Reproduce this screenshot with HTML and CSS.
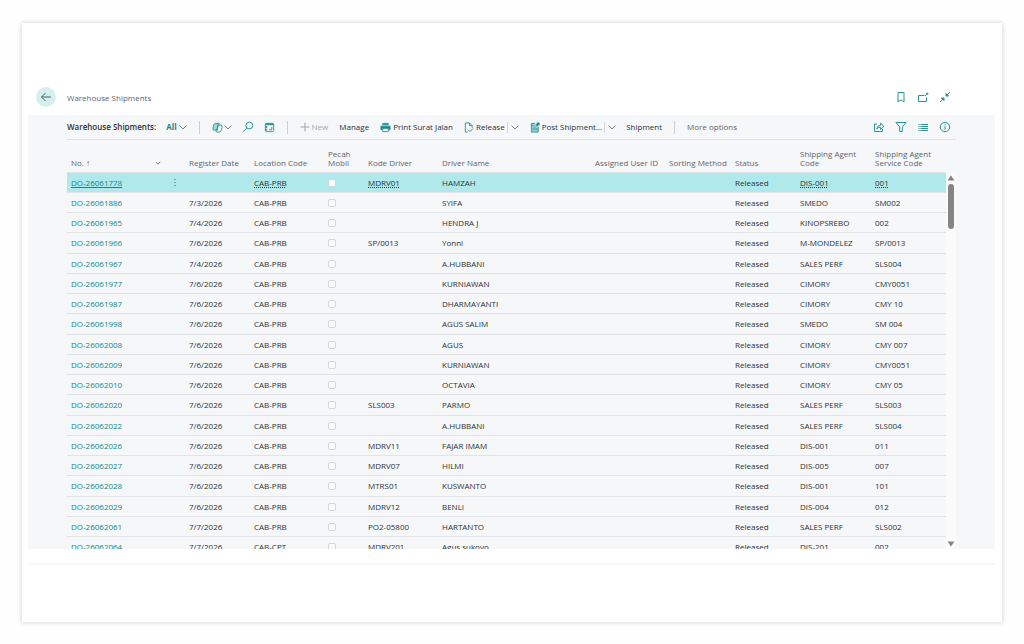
FILE: index.html
```html
<!DOCTYPE html>
<html lang="en">
<head>
    <meta charset="UTF-8">
    <title>Warehouse Shipments</title>
    <link rel="stylesheet" href="styles.css">
</head>
<body>
    <main class="sheet">
        <!-- Page title -->
        <header class="top">
            <button class="back" aria-label="Back">
                <svg width="12" height="12" viewBox="0 0 12 12"><path d="M11 6H1.5M5.5 2L1.5 6l4 4"/></svg>
            </button>
            <h1>Warehouse Shipments</h1>
            <div class="icons">
                <button aria-label="Bookmark"><svg width="12" height="12" viewBox="0 0 12 12"><path d="M3 1.500h6v9.500L6 8.800 3 11z"/></svg></button>
                <button aria-label="Open in new window"><svg width="12" height="12" viewBox="0 0 12 12"><path d="M7.500 4.500H1.500v6h8V6.500M8 5L10.500 2.500"/><path class="solid" d="M9.500 2.200h1.300v1.300z"/></svg></button>
                <button aria-label="Collapse"><svg width="12" height="12" viewBox="0 0 12 12"><path d="M11 1L7.500 4.500M1 11l3.500-3.500"/><path class="solid" d="M7 2.500V5h2.500zM2.500 7H5v2.500z"/></svg></button>
            </div>
        </header>

        <section class="panel">
            <!-- Action bar -->
            <div class="toolbar">
                <strong class="view-name">Warehouse Shipments:</strong>
                <button class="all">All <svg width="8" height="8" viewBox="0 0 8 8" class="chev"><path d="M.5 2.500L4 6l3.500-3.500"/></svg></button>
                <span class="divider"></span>
                <button class="copilot" aria-label="Copilot">
                    <svg width="11" height="11" viewBox="0 0 12 12"><path class="pale" d="M4 1.500h3L5 9H2.500Q.7 9 1 7l.7-3.500Q2.300 1.500 4 1.500z"/><path d="M4 1.500h3.500q1 0 1.300 1.500M4 1.500Q2.300 1.500 1.700 3.500L1 7q-.2 2 1.500 2H5l2-7.500M8 11H5.500Q4.500 11 4.300 9.500M8 11q1.500 0 2.300-2.500L11 6q.5-2.500-1.500-2.500H7L5.300 10"/></svg>
                    <svg width="8" height="8" viewBox="0 0 8 8" class="chev"><path d="M.5 2.500L4 6l3.500-3.500"/></svg>
                </button>
                <button class="search" aria-label="Search"><svg width="12" height="12" viewBox="0 0 12 12"><circle cx="7.300" cy="4.500" r="3.400"/><path d="M4.800 7L1 10.800"/></svg></button>
                <button class="analyze" aria-label="Analyze"><svg width="11" height="11" viewBox="0 0 12 12"><rect x="1.500" y="1.500" width="9" height="9" rx="1"/><path class="solid" d="M2 2h8v1H2zM2 5h1v1H2zM2 8h1v1H2z"/><path d="M8.500 5.500v3H5.500"/></svg></button>
                <span class="divider"></span>
                <button class="new" disabled><svg width="10" height="10" viewBox="0 0 10 10"><path d="M5 .5v9M.5 5h9"/></svg>New</button>
                <button class="action">Manage</button>
                <button class="action"><svg width="11" height="11" viewBox="0 0 12 12"><path class="solid" d="M3 1.500h6v1.500H3zM1 4.500h10v4H9.500V7h-7v1.500H1z"/><path class="paper" d="M3 7h6v3.500H3z"/></svg>Print Surat Jalan</button>
                <button class="action"><svg width="10" height="11" viewBox="0 0 10 12"><path d="M3.500 11H1V1h4.500L8.500 4v2.500M5.500 1v3h3M4 8.500l2 2L9.500 7"/></svg>Release</button>
                <button class="split" aria-label="More release options"><svg width="8" height="8" viewBox="0 0 8 8" class="chev"><path d="M.5 2.500L4 6l3.500-3.500"/></svg></button>
                <button class="action"><svg width="10" height="11" viewBox="0 0 10 12"><path class="pale" d="M1 1h5v3h3v7H1z"/><path d="M5 1.500H1v9.500h7.500V5.500M1 4h3M3 6v3M5 5v4M7 6.500V9"/><path class="solid" d="M7 1h2.500v2.500L8.500 3 7 4.500 6 3.500 7.500 2z"/></svg>Post Shipment...</button>
                <button class="split" aria-label="More posting options"><svg width="8" height="8" viewBox="0 0 8 8" class="chev"><path d="M.5 2.500L4 6l3.500-3.500"/></svg></button>
                <button class="shipment">Shipment</button>
                <span class="divider"></span>
                <button class="more">More options</button>
                <div class="icons">
                    <button aria-label="Share"><svg width="12" height="12" viewBox="0 0 12 12"><path d="M4 3H1.500v7.500h8V8M3.800 8q.2-3.700 3.700-3.700V2.200l3.500 3.200-3.500 3V6.300Q5 6.300 3.800 8z"/></svg></button>
                    <button aria-label="Filter"><svg width="12" height="12" viewBox="0 0 12 12"><path d="M1 1.500h10L7.300 6v4.500H4.700V6z"/></svg></button>
                    <button aria-label="List view"><svg width="12" height="12" viewBox="0 0 12 12"><path d="M1.500 3.500h1M3.500 3.500h7.500M1.500 5.500h1M3.500 5.500h7.500M1.500 7.500h1M3.500 7.500h7.500M1.500 9.500h1M3.500 9.500h7.500"/></svg></button>
                    <button aria-label="Details"><svg width="12" height="12" viewBox="0 0 12 12"><circle cx="6" cy="6" r="4.700"/><path d="M6 5.200v3.300M6 3.300v1"/></svg></button>
                </div>
            </div>

            <!-- Shipment list -->
            <div class="list">
                <div class="rows">
                    <table>
                        <colgroup>
                            <col class="c-no"><col class="c-date"><col class="c-mid"><col class="c-check"><col class="c-mid"><col class="c-name"><col class="c-mid"><col class="c-sort"><col class="c-date"><col class="c-agent"><col class="c-agent">
                        </colgroup>
                        <thead>
                            <tr>
                                <th><div class="no-head">No. ↑ <svg width="6" height="6" viewBox="0 0 8 8"><path d="M1 2.500l3 3 3-3"/></svg></div></th>
                                <th>Register Date</th><th>Location Code</th><th>Pecah<br>Mobil</th><th>Kode Driver</th><th>Driver Name</th><th>Assigned User ID</th><th>Sorting Method</th><th>Status</th><th>Shipping Agent<br>Code</th><th>Shipping Agent<br>Service Code</th>
                            </tr>
                        </thead>
                        <tbody>
                            <tr class="selected"><td><div class="no-cell"><a href="#">DO-26061778</a><button aria-label="Row options"><svg width="4" height="12" viewBox="0 0 4 12"><path d="M1.500 2.500h1M1.500 5.500h1M1.500 8.500h1"/></svg></button></div></td><td></td><td><u>CAB-PRB</u></td><td><input type="checkbox" aria-label="Pecah Mobil"></td><td><u>MDRV01</u></td><td>HAMZAH</td><td></td><td></td><td>Released</td><td><u>DIS-001</u></td><td><u>001</u></td></tr>
                            <tr><td><a href="#">DO-26061886</a></td><td>7/3/2026</td><td>CAB-PRB</td><td><input type="checkbox" aria-label="Pecah Mobil"></td><td></td><td>SYIFA</td><td></td><td></td><td>Released</td><td>SMEDO</td><td>SM002</td></tr>
                            <tr><td><a href="#">DO-26061965</a></td><td>7/4/2026</td><td>CAB-PRB</td><td><input type="checkbox" aria-label="Pecah Mobil"></td><td></td><td>HENDRA J</td><td></td><td></td><td>Released</td><td>KINOPSREBO</td><td>002</td></tr>
                            <tr><td><a href="#">DO-26061966</a></td><td>7/6/2026</td><td>CAB-PRB</td><td><input type="checkbox" aria-label="Pecah Mobil"></td><td>SP/0013</td><td>Yonni</td><td></td><td></td><td>Released</td><td>M-MONDELEZ</td><td>SP/0013</td></tr>
                            <tr><td><a href="#">DO-26061967</a></td><td>7/4/2026</td><td>CAB-PRB</td><td><input type="checkbox" aria-label="Pecah Mobil"></td><td></td><td>A.HUBBANI</td><td></td><td></td><td>Released</td><td>SALES PERF</td><td>SLS004</td></tr>
                            <tr><td><a href="#">DO-26061977</a></td><td>7/6/2026</td><td>CAB-PRB</td><td><input type="checkbox" aria-label="Pecah Mobil"></td><td></td><td>KURNIAWAN</td><td></td><td></td><td>Released</td><td>CIMORY</td><td>CMY0051</td></tr>
                            <tr><td><a href="#">DO-26061987</a></td><td>7/6/2026</td><td>CAB-PRB</td><td><input type="checkbox" aria-label="Pecah Mobil"></td><td></td><td>DHARMAYANTI</td><td></td><td></td><td>Released</td><td>CIMORY</td><td>CMY 10</td></tr>
                            <tr><td><a href="#">DO-26061998</a></td><td>7/6/2026</td><td>CAB-PRB</td><td><input type="checkbox" aria-label="Pecah Mobil"></td><td></td><td>AGUS SALIM</td><td></td><td></td><td>Released</td><td>SMEDO</td><td>SM 004</td></tr>
                            <tr><td><a href="#">DO-26062008</a></td><td>7/6/2026</td><td>CAB-PRB</td><td><input type="checkbox" aria-label="Pecah Mobil"></td><td></td><td>AGUS</td><td></td><td></td><td>Released</td><td>CIMORY</td><td>CMY 007</td></tr>
                            <tr><td><a href="#">DO-26062009</a></td><td>7/6/2026</td><td>CAB-PRB</td><td><input type="checkbox" aria-label="Pecah Mobil"></td><td></td><td>KURNIAWAN</td><td></td><td></td><td>Released</td><td>CIMORY</td><td>CMY0051</td></tr>
                            <tr><td><a href="#">DO-26062010</a></td><td>7/6/2026</td><td>CAB-PRB</td><td><input type="checkbox" aria-label="Pecah Mobil"></td><td></td><td>OCTAVIA</td><td></td><td></td><td>Released</td><td>CIMORY</td><td>CMY 05</td></tr>
                            <tr><td><a href="#">DO-26062020</a></td><td>7/6/2026</td><td>CAB-PRB</td><td><input type="checkbox" aria-label="Pecah Mobil"></td><td>SLS003</td><td>PARMO</td><td></td><td></td><td>Released</td><td>SALES PERF</td><td>SLS003</td></tr>
                            <tr><td><a href="#">DO-26062022</a></td><td>7/6/2026</td><td>CAB-PRB</td><td><input type="checkbox" aria-label="Pecah Mobil"></td><td></td><td>A.HUBBANI</td><td></td><td></td><td>Released</td><td>SALES PERF</td><td>SLS004</td></tr>
                            <tr><td><a href="#">DO-26062026</a></td><td>7/6/2026</td><td>CAB-PRB</td><td><input type="checkbox" aria-label="Pecah Mobil"></td><td>MDRV11</td><td>FAJAR IMAM</td><td></td><td></td><td>Released</td><td>DIS-001</td><td>011</td></tr>
                            <tr><td><a href="#">DO-26062027</a></td><td>7/6/2026</td><td>CAB-PRB</td><td><input type="checkbox" aria-label="Pecah Mobil"></td><td>MDRV07</td><td>HILMI</td><td></td><td></td><td>Released</td><td>DIS-005</td><td>007</td></tr>
                            <tr><td><a href="#">DO-26062028</a></td><td>7/6/2026</td><td>CAB-PRB</td><td><input type="checkbox" aria-label="Pecah Mobil"></td><td>MTRS01</td><td>KUSWANTO</td><td></td><td></td><td>Released</td><td>DIS-001</td><td>101</td></tr>
                            <tr><td><a href="#">DO-26062029</a></td><td>7/6/2026</td><td>CAB-PRB</td><td><input type="checkbox" aria-label="Pecah Mobil"></td><td>MDRV12</td><td>BENLI</td><td></td><td></td><td>Released</td><td>DIS-004</td><td>012</td></tr>
                            <tr><td><a href="#">DO-26062061</a></td><td>7/7/2026</td><td>CAB-PRB</td><td><input type="checkbox" aria-label="Pecah Mobil"></td><td>PO2-05800</td><td>HARTANTO</td><td></td><td></td><td>Released</td><td>SALES PERF</td><td>SLS002</td></tr>
                            <tr><td><a href="#">DO-26062064</a></td><td>7/7/2026</td><td>CAB-CPT</td><td><input type="checkbox" aria-label="Pecah Mobil"></td><td>MDRV201</td><td>Agus sukoyo</td><td></td><td></td><td>Released</td><td>DIS-201</td><td>002</td></tr>
                        </tbody>
                    </table>
                </div>
                <div class="scrollbar">
                    <svg width="8" height="6" viewBox="0 0 8 6"><path d="M4 .5L7.500 5.500h-7z"/></svg>
                    <div class="thumb"></div>
                    <svg class="down" width="8" height="6" viewBox="0 0 8 6"><path d="M4 5.500L.5.500h7z"/></svg>
                </div>
            </div>
        </section>
        <div class="foot"></div>
    </main>
</body>
</html>
```
FILE: styles.css
```css
body {
    margin: 0;
    padding: 23px 22px;
    background-color: #fefefe;
    color: #2e3236;
    font-family: "Open Sans", "Noto Sans", sans-serif;
    font-size: 8px;
    line-height: 10px;
}

/* White card that holds the whole page */
.sheet {
    padding: 62px 7px 57px 6px;
    background-color: white;
    box-shadow: 0 0 5px rgba(0, 0, 0, 0.2);
}

svg {
    flex: none;
    fill: none;
    stroke: #2b9494;
    stroke-width: 1;
}

svg .solid {
    fill: #14878a;
}

svg .paper {
    fill: #f5f7f9;
}

svg .pale {
    fill: #a5d6d6;
    stroke: none;
}

button {
    display: flex;
    align-items: center;
    padding: 0;
    border: 0;
    background: none;
    color: inherit;
    font: inherit;
    white-space: nowrap;
}

/* Title row */
.top {
    display: flex;
    align-items: center;
    height: 24px;
    margin-bottom: 6px;
    padding: 0 39px 0 8px;
}

.back {
    justify-content: center;
    width: 20px;
    height: 20px;
    border-radius: 50%;
    background-color: #d3eff0;
}

.back svg {
    stroke: #4d6266;
}

h1 {
    margin: 2px 0 0 11px;
    color: #5f656a;
    font-size: 8px;
    font-weight: normal;
}

.icons {
    display: flex;
    gap: 10px;
    margin-left: auto;
    padding-right: 5px;
}

/* Grey work area */
.panel {
    padding: 0 39px;
    background-color: #f5f7f9;
}

.toolbar {
    display: flex;
    align-items: center;
    height: 24px;
    border-bottom: 1px solid #dfe1e4;
}

.view-name {
    font-weight: 600;
}

.all {
    gap: 2px;
    margin-left: 10px;
    color: #14878a;
    font-weight: 700;
}

.chev {
    stroke: #7d8488;
}

.divider {
    width: 1px;
    height: 13px;
    margin: 0 12px;
    background-color: #cdd0d3;
}

.copilot {
    gap: 1px;
}

.search,
.analyze {
    margin-left: 10px;
}

.new {
    gap: 2px;
    color: #a3a7aa;
}

.new svg {
    stroke: #a3a7aa;
}

.action {
    gap: 2px;
    margin-left: 11px;
}

.split {
    height: 11px;
    margin-left: 2px;
    padding-left: 3px;
    border-left: 1px solid #d5d8da;
}

.shipment {
    margin-left: 10px;
}

.more {
    color: #5f656a;
}

/* List with its scrollbar */
.list {
    display: flex;
    height: 409px;
}

.rows {
    flex: 1;
    overflow: hidden;
}

table {
    width: 100%;
    border-collapse: separate;
    border-spacing: 0;
    table-layout: fixed;
}

.c-no { width: 118px; }
.c-date { width: 65px; }
.c-mid { width: 74px; }
.c-check { width: 40px; }
.c-name { width: 153px; }
.c-sort { width: 66px; }
.c-agent { width: 75px; }

th,
td {
    padding: 0 0 0 4px;
    border-bottom: 1px solid #e1e3e6;
    text-align: left;
    white-space: nowrap;
}

th {
    height: 27px;
    padding-bottom: 5px;
    color: #5f656a;
    font-weight: normal;
    line-height: 9px;
    vertical-align: bottom;
}

td {
    height: 19px;
}

tr:nth-child(4n) td {
    height: 20px;
}

.no-head,
.no-cell {
    display: flex;
    align-items: center;
    justify-content: space-between;
}

.no-head {
    padding-right: 24px;
}

.no-cell {
    padding-right: 8px;
}

.no-head svg,
.no-cell svg {
    stroke: #4d6266;
}

td a {
    color: #14878a;
    text-decoration: none;
}

.selected td {
    background-color: #b0e9eb;
}

.selected a {
    text-decoration: underline;
}

.selected u {
    text-decoration: underline dotted;
}

input {
    display: block;
    appearance: none;
    width: 8px;
    height: 8px;
    margin: 0;
    border: 1px solid #d5d8da;
    border-radius: 2px;
    background-color: #f8fafb;
}

.scrollbar {
    display: flex;
    flex-direction: column;
    align-items: center;
    width: 10px;
    margin-top: 33px;
    padding: 2px 0;
    background-color: #fbfbfc;
}

.scrollbar svg {
    fill: #858585;
    stroke: none;
}

.thumb {
    width: 6px;
    height: 45px;
    margin-top: 3px;
    border-radius: 3px;
    background-color: #858585;
}

.down {
    margin-top: auto;
}

.foot {
    height: 14px;
    border-bottom: 2px solid #f6f7f8;
}
```
